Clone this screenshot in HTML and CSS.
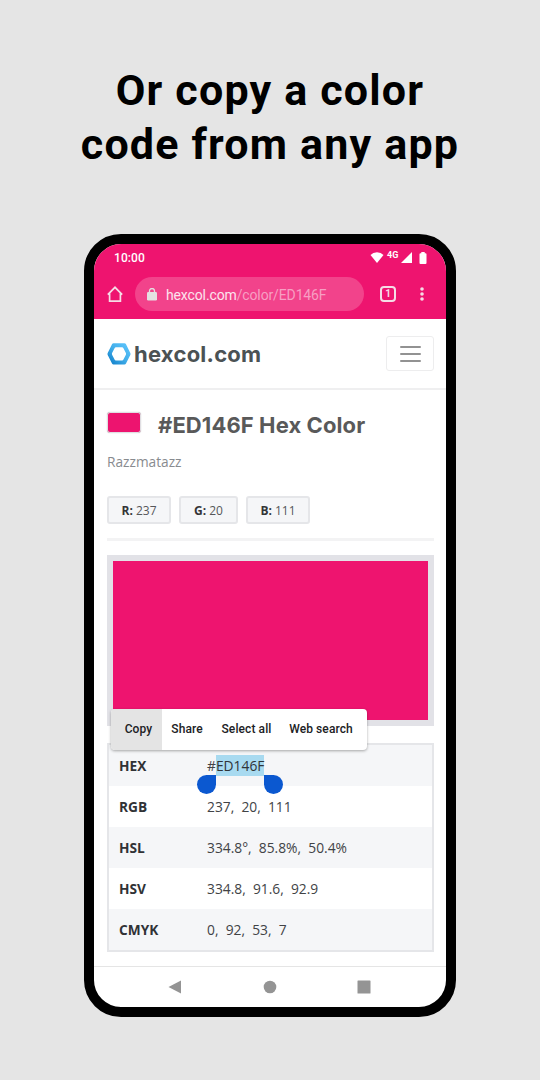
FILE: index.html
```html
<!DOCTYPE html>
<html lang="en">
<head>
<meta charset="utf-8">
<title>hexcol.com</title>
<link rel="stylesheet" href="styles.css">
</head>
<body>
<h1 class="headline"><span class="line-one">Or copy a color</span><br><span class="line-two">code from any app</span></h1>
<main class="phone">
  <header class="chrome">
    <div class="status">
      <span class="clock">10:00</span>
      <svg class="wifi" width="14" height="11" viewBox="0 0 14 11"><path fill="#fff" d="M7 11 .5 3Q3 .3 7 .3T13.500 3Z"/></svg>
      <span class="network">4G</span>
      <svg class="signal" width="11" height="11" viewBox="0 0 11 11"><path fill="#fff" d="M11 0V11H0Z"/></svg>
      <svg class="battery" width="8" height="12" viewBox="0 0 8 12"><path fill="#fff" d="M2.300 1.200V0h3.400v1.200H6.500q1 0 1 1V11q0 1-1 1h-5q-1 0-1-1V2.200q0-1 1-1Z"/></svg>
    </div>
    <div class="toolbar">
      <svg class="home" width="16" height="16" viewBox="0 0 16 16"><path fill="none" stroke="#f5dce6" stroke-width="1.700" d="M.8 8.700 8 1.300l7.200 7.400M2.600 7.400v7.700h10.800V7.400"/></svg>
      <div class="address">
        <svg class="lock" width="10" height="13" viewBox="0 0 10 13"><rect y="4" width="10" height="8.500" rx="1.200" fill="#e4e0e2"/><path d="M2.500 5V3a2.500 2.500 0 0 1 5 0v2" fill="none" stroke="#e4e0e2" stroke-width="1.300"/></svg>
        <span class="url">hexcol.com<span class="path">/color/ED146F</span></span>
      </div>
      <span class="tabs">1</span>
      <svg class="more" width="4" height="14" viewBox="0 0 4 14" fill="#f5dce6"><circle cx="2" cy="2" r="1.800"/><circle cx="2" cy="7" r="1.800"/><circle cx="2" cy="12" r="1.800"/></svg>
    </div>
  </header>
  <div class="site-bar">
    <svg class="logo" width="24" height="22" viewBox="0 0 24 22">
      <defs><linearGradient id="blue" x1="1" y1="0" x2="0" y2="1"><stop offset="0" stop-color="#62c8ff"/><stop offset=".5" stop-color="#42aeea"/><stop offset="1" stop-color="#0878c4"/></linearGradient></defs>
      <path fill="url(#blue)" fill-rule="evenodd" d="M6.500.3h11q1 0 1.500.9l4.300 8.700q.5 1 0 2L19 20.600q-.5.900-1.500.9h-11q-1 0-1.500-.9L.7 11.900q-.5-1 0-2L5 1.200Q5.500.3 6.500.3ZM8.800 4.300Q8.100 4.300 7.700 5L5.100 10.100q-.4.800 0 1.600L7.700 16.800q.4.700 1.100.7h6.400q.7 0 1.100-.7l2.600-5.100q.4-.8 0-1.600L16.300 5q-.4-.7-1.100-.7Z"/>
    </svg>
    <span class="brand">hexcol.com</span>
    <button class="menu" aria-label="Menu"><i></i><i></i><i></i></button>
  </div>
  <section class="content">
    <div class="title-row"><span class="swatch"></span><h2 class="title">#ED146F Hex Color</h2></div>
    <p class="color-name">Razzmatazz</p>
    <div class="chips"><span class="chip red"><b>R:</b> 237</span><span class="chip green"><b>G:</b> 20</span><span class="chip red"><b>B:</b> 111</span></div>
    <div class="divider"></div>
    <div class="preview">
      <div class="popup"><span class="action copy">Copy</span><span class="action share">Share</span><span class="action select">Select all</span><span class="action search">Web search</span></div>
    </div>
    <div class="values">
      <div class="row"><b>HEX</b><span>#<mark class="selected">ED146F</mark></span></div>
      <div class="row"><b>RGB</b><span>237,  20,  111</span></div>
      <div class="row"><b>HSL</b><span>334.8°,  85.8%,  50.4%</span></div>
      <div class="row"><b>HSV</b><span>334.8,  91.6,  92.9</span></div>
      <div class="row"><b>CMYK</b><span>0,  92,  53,  7</span></div>
    </div>
  </section>
  <nav class="system-nav">
    <svg width="14" height="14" viewBox="0 0 14 14"><path fill="#949494" d="M13 .5v13L.5 7Z"/></svg>
    <svg width="14" height="14" viewBox="0 0 14 14"><circle cx="7" cy="7" r="6.300" fill="#949494"/></svg>
    <svg width="14" height="14" viewBox="0 0 14 14"><rect x=".5" y=".5" width="13" height="13" rx=".6" fill="#949494"/></svg>
  </nav>
</main>
</body>
</html>
```
FILE: styles.css
```css
* { box-sizing: border-box; }
body { margin: 0; height: 1080px; background: #e5e5e5; padding-top: 63px; font-family: "Open Sans", "Noto Sans", sans-serif; overflow: hidden; }
svg { display: block; flex: none; }
.headline { margin: 0; height: 171px; text-align: center; font: 700 43px/54px Roboto, sans-serif; color: #000; letter-spacing: 1.18px; white-space: nowrap; }
.phone { width: 372px; height: 783px; margin: 0 auto; border: 10px solid #000; border-radius: 37px; overflow: hidden; background: #fff; display: flex; flex-direction: column; }
.chrome { height: 75px; flex: none; background: #ee146f; font-family: Roboto, sans-serif; }
.status { height: 27px; display: flex; align-items: center; padding: 0 19px 0 20px; color: #fff; }
.clock { font-size: 12px; font-weight: 500; letter-spacing: .1px; margin-right: auto; }
.network { font-size: 9px; font-weight: 700; margin: -5px 2px 0 3px; width: 12px; }
.signal { margin-right: 7px; }
.toolbar { height: 46px; display: flex; align-items: center; padding-left: 13px; }
.address { width: 229px; height: 34px; margin-left: 12px; border-radius: 17px; background: #f2438b; display: flex; align-items: center; padding-left: 12px; }
.url { margin-left: 9px; padding-top: 1px; color: #fce3ee; font-size: 14px; letter-spacing: -.13px; }
.path { color: #f79fc3; }
.tabs { width: 16px; height: 16px; border: 2px solid #f5dce6; border-radius: 4px; margin-left: 16px; color: #f5dce6; font-size: 10px; line-height: 12px; font-weight: 700; text-align: center; }
.more { margin-left: 24px; }
.site-bar { height: 71px; flex: none; border-bottom: 2px solid #efeff0; display: flex; align-items: center; padding: 0 12px 0 13px; }
.brand { font: 700 22px/30px Inter, sans-serif; color: #4b5254; letter-spacing: .25px; margin: 1px 0 0 3px; }
.menu { width: 48px; height: 35px; background: #fff; border: 1px solid #ededee; border-radius: 3px; padding: 0; margin: 0 0 0 auto; display: flex; flex-direction: column; justify-content: center; align-items: center; gap: 5px; }
.menu i { width: 21px; height: 2px; background: #929292; border-radius: 1px; }
.content { padding: 20px 12px 0 13px; height: 576px; }
.title-row { height: 30px; display: flex; align-items: center; }
.swatch { width: 34px; height: 21px; background: #ed146f; border: 1px solid #e0dee2; border-radius: 3px; margin-bottom: 6px; box-shadow: 0 0 1px #aaa; }
.title { font: 700 22px/30px Inter, sans-serif; letter-spacing: .1px; color: #595959; margin: 0 0 0 17px; white-space: nowrap; }
.color-name { margin: 12px 0 0; font-size: 13.7px; line-height: 20px; color: #888b8f; }
.chips { margin-top: 24px; display: flex; gap: 8px; }
.chip { height: 28px; border: 2px solid #e5e6e9; border-radius: 3px; background: #f5f6f8; text-align: center; font-size: 12px; line-height: 25px; color: #56575a; }
.chip b { color: #333437; }
.red { width: 64px; }
.green { width: 59px; }
.divider { height: 3px; margin-top: 14px; background: #f3f3f4; }
.preview { position: relative; height: 171px; margin-top: 14px; border: 6px solid #e2e2e7; background: #ee146f; }
.values { height: 209px; margin-top: 17px; border: 2px solid #e5e6e9; }
.row { height: 41px; display: flex; align-items: center; padding-left: 10px; font-size: 13.8px; color: #414346; background: #f5f6f8; white-space: pre; }
.row:nth-child(even) { background: #fff; }
.row b { width: 88px; font-size: 13.7px; color: #303236; }
.selected { position: relative; display: inline-block; height: 21px; line-height: 21px; background: #a8daf0; color: #303438; }
.selected::before, .selected::after { content: ""; position: absolute; top: 20px; width: 19px; height: 19px; background: #0b58d0; }
.selected::before { right: 100%; border-radius: 50% 0 50% 50%; }
.selected::after { left: 100%; border-radius: 0 50% 50% 50%; }
.popup { position: absolute; z-index: 1; left: -2px; top: 148px; width: 256px; height: 41px; background: #fff; border-radius: 4px; display: flex; overflow: hidden; box-shadow: 0 1px 3px #0005; font: 500 12px/41px Roboto, sans-serif; letter-spacing: .1px; color: #202124; white-space: nowrap; }
.action { text-align: center; }
.copy { width: 51px; padding-left: 4px; background: #e4e4e4; }
.share { width: 50px; }
.select { width: 69px; }
.search { width: 80px; }
.system-nav { flex: 1; border-top: 1px solid #e5e5e5; display: flex; align-items: center; justify-content: space-between; padding: 0 75px 1px 74px; }
```
